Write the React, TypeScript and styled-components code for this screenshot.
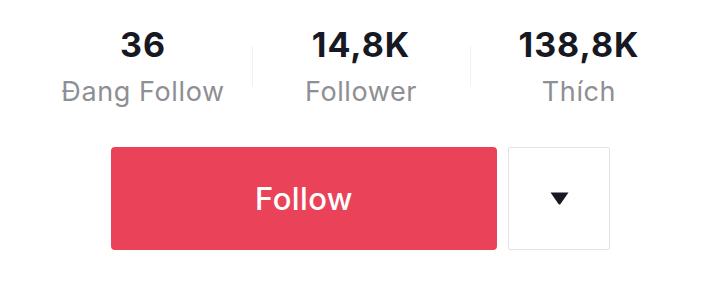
import { createGlobalStyle, styled } from "styled-components";

const GlobalStyle = createGlobalStyle`
  body {
    margin: 0;
    background: #ffffff;
    font-family: "Inter", "Liberation Sans", sans-serif;
  }
`;

const Profile = styled.div`
  width: 654px;
  margin-left: 34px;
  padding-top: 25px;
`;

const StatsRow = styled.div`
  display: grid;
  grid-template-columns: repeat(3, 1fr);
  height: 95px;
`;

const Stat = styled.div<{ $divider?: boolean }>`
  position: relative;
  display: flex;
  flex-direction: column;
  align-items: center;
  &::before {
    content: "";
    display: ${(p) => (p.$divider ? "block" : "none")};
    position: absolute;
    left: 0;
    top: 21px;
    height: 40px;
    width: 1px;
    background: #f1f1f2;
  }
`;

const Count = styled.div`
  font-size: 34px;
  font-weight: 700;
  color: #161823;
  line-height: 40px;
  letter-spacing: 1px;
`;

const Label = styled.div`
  font-size: 27px;
  color: #8e8f94;
  line-height: 54px;
  letter-spacing: 0.6px;
`;

const Actions = styled.div`
  display: flex;
  gap: 11px;
  margin-top: 27px;
  margin-left: 77px;
`;

const FollowButton = styled.button`
  width: 386px;
  height: 103px;
  border: none;
  border-radius: 4px;
  background: #ea4359;
  color: #ffffff;
  font-family: inherit;
  font-size: 31px;
  font-weight: 500;
  letter-spacing: 0.4px;
  cursor: pointer;
`;

const MoreButton = styled.button`
  width: 102px;
  height: 103px;
  box-sizing: border-box;
  border: 1px solid #e3e3e4;
  border-radius: 2px;
  background: #ffffff;
  display: flex;
  align-items: center;
  justify-content: center;
  cursor: pointer;
`;

const stats = [
  { count: "36", label: "Đang Follow" },
  { count: "14,8K", label: "Follower" },
  { count: "138,8K", label: "Thích" },
];

export default function App() {
  return (
    <>
      <GlobalStyle />
      <Profile>
        <StatsRow>
          {stats.map((s, i) => (
            <Stat key={s.label} $divider={i > 0}>
              <Count>{s.count}</Count>
              <Label>{s.label}</Label>
            </Stat>
          ))}
        </StatsRow>
        <Actions>
          <FollowButton type="button">Follow</FollowButton>
          <MoreButton type="button" aria-label="More">
            <svg width="19" height="13" viewBox="0 0 19 13">
              <path d="M0.5 0.5 L18.5 0.5 L10.5 12 Q9.5 13 8.5 12 Z" fill="#161823" />
            </svg>
          </MoreButton>
        </Actions>
      </Profile>
    </>
  );
}
